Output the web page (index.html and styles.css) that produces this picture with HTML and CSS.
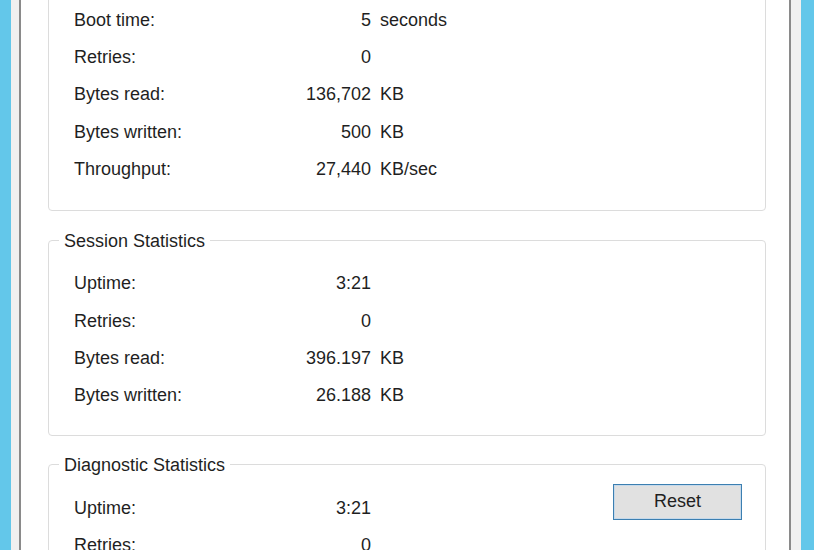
FILE: index.html
```html
<!DOCTYPE html>
<html>
<head>
<meta charset="utf-8">
<link rel="stylesheet" href="styles.css">
</head>
<body>
<div class="frame">
  <div class="edge edge-left"></div>
  <div class="dialog">
    <div class="page">
      <div class="group group-top">
        <div class="rows">
          <div class="row"><span class="lbl">Boot time:</span><span class="val">5</span><span class="unit">seconds</span></div>
          <div class="row"><span class="lbl">Retries:</span><span class="val">0</span><span class="unit"></span></div>
          <div class="row"><span class="lbl">Bytes read:</span><span class="val">136,702</span><span class="unit">KB</span></div>
          <div class="row"><span class="lbl">Bytes written:</span><span class="val">500</span><span class="unit">KB</span></div>
          <div class="row"><span class="lbl">Throughput:</span><span class="val">27,440</span><span class="unit">KB/sec</span></div>
        </div>
      </div>
      <fieldset class="group group-session">
        <legend>Session Statistics</legend>
        <div class="rows">
          <div class="row"><span class="lbl">Uptime:</span><span class="val">3:21</span><span class="unit"></span></div>
          <div class="row"><span class="lbl">Retries:</span><span class="val">0</span><span class="unit"></span></div>
          <div class="row"><span class="lbl">Bytes read:</span><span class="val">396.197</span><span class="unit">KB</span></div>
          <div class="row"><span class="lbl">Bytes written:</span><span class="val">26.188</span><span class="unit">KB</span></div>
        </div>
      </fieldset>
      <fieldset class="group group-diag">
        <legend>Diagnostic Statistics</legend>
        <div class="diag-body">
          <div class="rows">
            <div class="row"><span class="lbl">Uptime:</span><span class="val">3:21</span><span class="unit"></span></div>
            <div class="row"><span class="lbl">Retries:</span><span class="val">0</span><span class="unit"></span></div>
          </div>
          <button class="btn">Reset</button>
        </div>
      </fieldset>
    </div>
  </div>
  <div class="edge edge-right"></div>
</div>
</body>
</html>
```
FILE: styles.css
```css
html, body {
  margin: 0;
  padding: 0;
  height: 100%;
  overflow: hidden;
}
body {
  font-family: "Liberation Sans", Arial, sans-serif;
  font-size: 18px;
  color: #1f1f1f;
  background: #63c7ea;
}
.frame {
  display: flex;
  height: 550px;
  width: 814px;
}
.edge {
  background: #63c7ea;
}
.edge-left { width: 11px; }
.edge-right { width: 13px; }
.dialog {
  flex: 1;
  background: #f0f0f0;
  padding: 0 10px 0 8px;
  display: flex;
}
.page {
  flex: 1;
  background: #ffffff;
  border-left: 2px solid #8a8a8a;
  border-right: 2px solid #8a8a8a;
  padding: 0 23px 0 27px;
  display: flex;
  flex-direction: column;
}
.group {
  border: 1px solid #dcdcdc;
  border-radius: 4px;
  margin: 0;
  min-width: 0;
}
.group-top {
  margin-top: -30px;
  padding: 30px 0 22px 25px;
}
fieldset.group {
  padding: 13px 0 21px 25px;
}
.group-session { margin-top: 19px; }
.group-diag { margin-top: 18px; }
legend {
  line-height: 22px;
  padding: 0 5px;
  margin-left: -15px;
  color: #1f1f1f;
}
.rows {
  display: flex;
  flex-direction: column;
}
.row {
  display: grid;
  grid-template-columns: 200px 97px auto;
  align-items: center;
  height: 37.33px;
  line-height: 22px;
}
.val {
  text-align: right;
}
.unit {
  padding-left: 9px;
}
.diag-body {
  display: flex;
  justify-content: space-between;
  align-items: flex-start;
}
.btn {
  margin-top: -5px;
  margin-right: 23px;
  width: 129px;
  height: 36px;
  background: #e1e1e1;
  border: 1px solid #3c7fb1;
  box-shadow: inset 0 0 0 1px #c6d9ea;
  border-radius: 0;
  font-family: "Liberation Sans", Arial, sans-serif;
  font-size: 18px;
  color: #1f1f1f;
  padding: 0;
}
```
